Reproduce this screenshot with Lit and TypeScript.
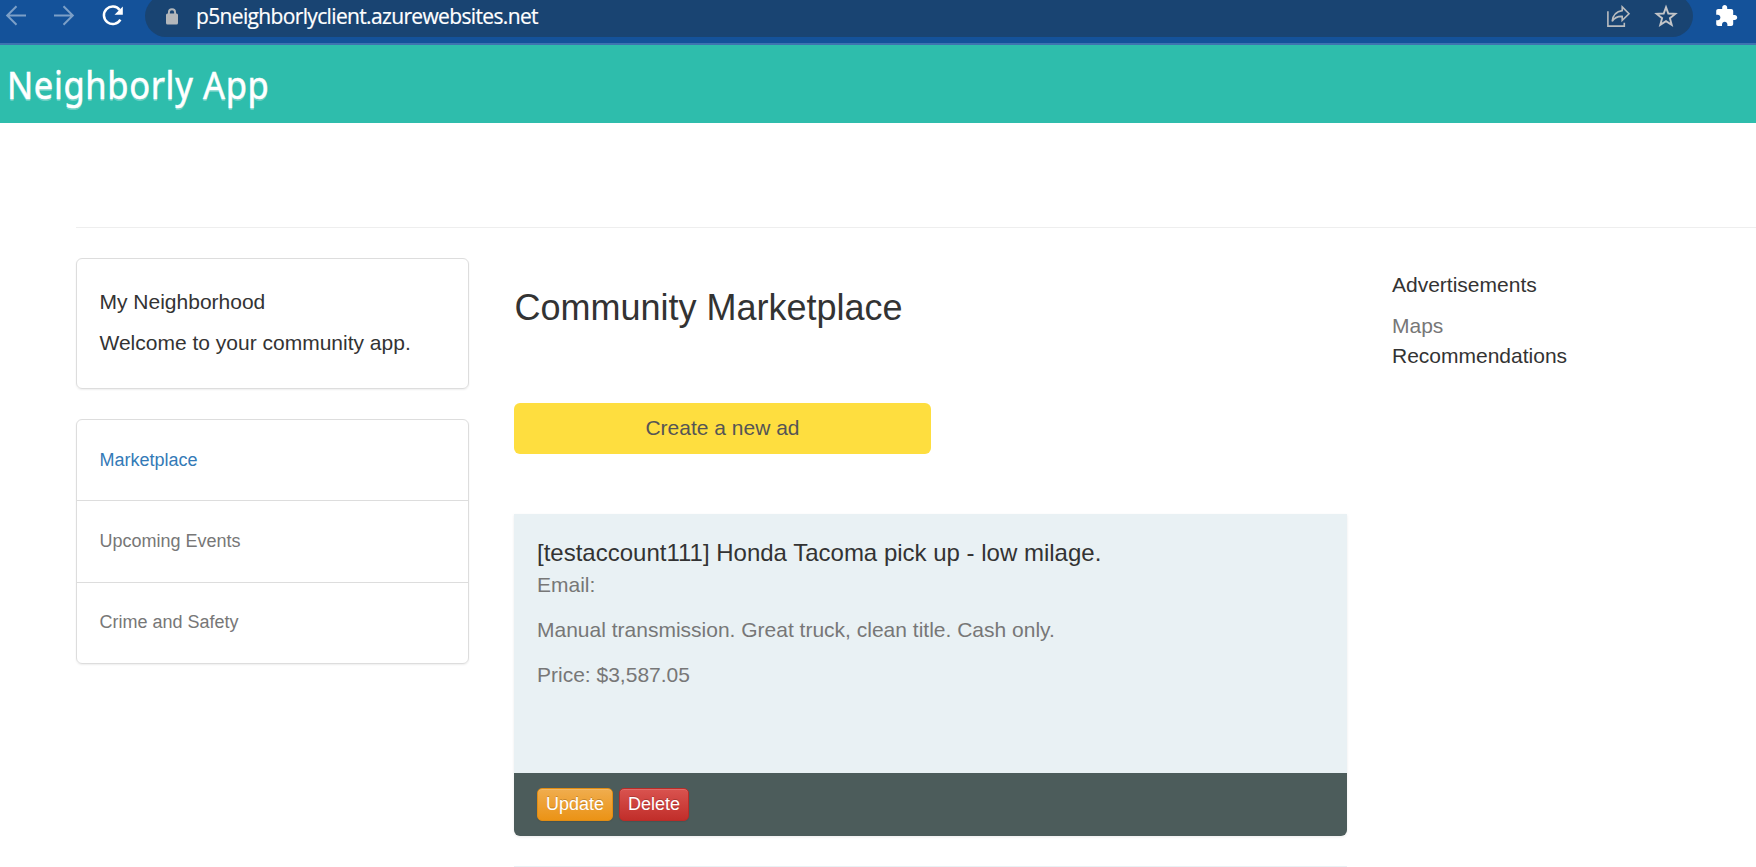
import { LitElement, html, css } from "lit";
import { customElement, property } from "lit/decorators.js";

@customElement("browser-bar")
class BrowserBar extends LitElement {
  static styles = css`
    :host { display: block; height: 43px; overflow: hidden; background: #14529a; border-bottom: 2px solid #3e73b0; }
    .row { display: flex; align-items: flex-start; height: 43px; }
    .nav { display: flex; flex: none; width: 145px; }
    svg { display: block; flex: none; }
    .back { margin-left: 4px; }
    .forward { margin-left: 24px; }
    .reload { margin-left: 24px; }
    .pill { display: flex; flex: none; width: 1548px; height: 42px; margin-top: -5px; padding-top: 5px; box-sizing: border-box; border-radius: 21px; background: #194472; }
    .lock { margin-left: 20px; }
    .url { flex: none; margin-left: 17px; width: 1409px; font: 21px/32px "Open Sans", "Noto Sans", sans-serif; letter-spacing: -0.65px; -webkit-text-stroke: 0.2px #fff; color: #fff; white-space: nowrap; }
    .star { margin-left: 23px; }
    .puzzle { margin-left: 20px; }
  `;
  render() {
    return html`<div class="row">
      <div class="nav">
        <svg class="back" width="24" height="32" viewBox="0 0 24 32" fill="none" stroke="#7c9fc7" stroke-width="2"><path d="M22 15.500H3.500M12.500 6.200L3.200 15.500l9.300 9.300" /></svg>
        <svg class="forward" width="24" height="32" viewBox="0 0 24 32" fill="none" stroke="#7c9fc7" stroke-width="2"><path d="M2 15.500h18.500M11.500 6.200l9.300 9.300-9.300 9.300" /></svg>
        <svg class="reload" width="26" height="32" viewBox="0 0 26 32"><path d="M19.700 9.900A8.800 8.800 0 1 0 20.400 19.600" fill="none" stroke="#fff" stroke-width="2.500" /><path d="M22.800 6.500v8.300h-8.300z" fill="#fff" /></svg>
      </div>
      <div class="pill">
        <svg class="lock" width="14" height="32" viewBox="0 0 14 32"><rect x="1" y="13.500" width="12" height="11" rx="1.500" fill="#b3b7bb" /><path d="M3.900 14v-1.600a3.100 3.100 0 0 1 6.200 0V14" fill="none" stroke="#b3b7bb" stroke-width="1.900" /></svg>
        <div class="url">p5neighborlyclient.azurewebsites.net</div>
        <svg class="share" width="26" height="32" viewBox="0 0 26 32" fill="none" stroke="#b9bcbf" stroke-width="1.600"><path d="M2.900 11.200v14.900h16.400v-3.400" /><path d="M17.200 6.900l6.800 6.800-6.800 6.700v-4c-4.700-.2-7.700 1.200-10 4.900.6-5.300 3.700-9.800 10-10.700z" /></svg>
        <svg class="star" width="24" height="32" viewBox="0 0 24 32" fill="none" stroke="#c3c5c8" stroke-width="1.900"><path d="M12 7.200l2.300 6.300 7 .4-5.400 4.300 1.800 6.700-5.700-3.700-5.700 3.700 1.800-6.700-5.400-4.300 7-.4z" /></svg>
      </div>
      <svg class="puzzle" width="27" height="32" viewBox="0 0 27 32"><path transform="translate(1.200 4)" fill="#fff" d="M20.500 11H19V7c0-1.100-.9-2-2-2h-4V3.500C13 2.120 11.880 1 10.500 1S8 2.120 8 3.500V5H4c-1.100 0-1.990.9-1.990 2v3.800H3.500c1.490 0 2.700 1.210 2.700 2.700s-1.210 2.700-2.700 2.700H2V20c0 1.100.9 2 2 2h3.800v-1.500c0-1.490 1.210-2.700 2.700-2.700 1.490 0 2.700 1.210 2.700 2.700V22H17c1.100 0 2-.9 2-2v-4h1.500c1.380 0 2.500-1.120 2.500-2.500S21.880 11 20.500 11z" /></svg>
    </div>`;
  }
}

interface Ad { title: string; email: string; text: string; price: string; }

@customElement("ad-card")
class AdCard extends LitElement {
  @property({ attribute: false }) ad!: Ad;
  static styles = css`
    :host { display: block; width: 833px; border-radius: 0 0 6px 6px; box-shadow: 0 1px 3px rgba(0, 0, 0, 0.08); overflow: hidden; }
    .body { height: 259px; padding: 26px 23px 0; box-sizing: border-box; background: #e9f1f4; color: #777; }
    h4 { margin: 0; font-size: 24px; line-height: 26px; font-weight: 400; color: #333; }
    p { margin: 0 0 15px; line-height: 30px; }
    .email { margin-top: 4px; }
    .foot { display: flex; gap: 6px; height: 63px; padding: 15px 23px 0; box-sizing: border-box; background: #4c5c5b; }
    button { height: 33px; padding: 0 8px 1px; box-sizing: border-box; font: 18px/26px "Liberation Sans", Arial, sans-serif; color: #fff; border: 1px solid; border-radius: 5px; text-shadow: 0 -1px 0 rgba(0, 0, 0, 0.2); box-shadow: inset 0 1px 0 rgba(255, 255, 255, 0.15), 0 1px 1px rgba(0, 0, 0, 0.075); }
    .update { width: 76px; background: linear-gradient(#f0ad4e, #eb9316); border-color: #e38d13; }
    .delete { width: 70px; background: linear-gradient(#d9534f, #c12e2a); border-color: #b92c28; }
  `;
  render() {
    return html`<div class="body">
        <h4>${this.ad.title}</h4>
        <p class="email">${this.ad.email}</p>
        <p>${this.ad.text}</p>
        <p>${this.ad.price}</p>
      </div>
      <div class="foot"><button class="update">Update</button><button class="delete">Delete</button></div>`;
  }
}

@customElement("app-root")
class AppRoot extends LitElement {
  static styles = css`
    :host { display: block; height: 867px; overflow: hidden; background: #fff; color: #333; font: 21px/30px "Liberation Sans", Arial, sans-serif; }
    header { height: 78px; padding: 15px 0 0 7px; box-sizing: border-box; background: #2ebdac; }
    .brand { display: inline-block; font: 400 37.5px/50px "Noto Sans", "Open Sans", sans-serif; letter-spacing: 0.7px; -webkit-text-stroke: 0.5px #fff; color: #fff; text-shadow: 0 2px 0 rgba(255, 255, 255, 0.3); white-space: nowrap; transform: scaleX(0.92); transform-origin: 0 0; }
    main { margin: 104px 0 0 76px; border-top: 1px solid #eee; padding-top: 30px; display: flex; align-items: flex-start; }
    .side { width: 393px; display: flex; flex-direction: column; gap: 30px; }
    .panel { border: 1px solid #ddd; border-radius: 6px; box-shadow: 0 1px 2px rgba(0, 0, 0, 0.07); box-sizing: border-box; }
    .intro { height: 131px; padding: 28px 22.5px 0; }
    .intro p { margin: 0 0 11px; }
    .menu { height: 245px; display: grid; grid-template-rows: 81px 82px 80px; font-size: 18px; line-height: 26px; color: #777; }
    .item { padding: 27px 22.5px 0; box-sizing: border-box; border-bottom: 1px solid #ddd; }
    .item:last-child { border-bottom: 0; padding-top: 26px; }
    .active { color: #337ab7; }
    .center { width: 833px; margin-left: 45px; padding-top: 30px; }
    h1 { margin: 0; padding-left: 0.5px; font-size: 36px; line-height: 40px; font-weight: 400; }
    .create { display: block; width: 417px; height: 51px; margin: 75px 0 60px; padding: 0 0 2px; border: 0; border-radius: 6px; background: #fede3f; color: #555; font: inherit; }
    hr { margin: 30px 0 0; border: 0; border-top: 1px solid #e9f1f4; }
    .ads { margin-left: 45px; padding-top: 12px; }
    .ads p { margin: 0; }
    .ads .maps { margin-top: 11px; color: #777; }
  `;
  private ad: Ad = {
    title: "[testaccount111] Honda Tacoma pick up - low milage.",
    email: "Email:",
    text: "Manual transmission. Great truck, clean title. Cash only.",
    price: "Price: $3,587.05",
  };
  render() {
    return html`<browser-bar></browser-bar>
      <header><span class="brand">Neighborly App</span></header>
      <main>
        <aside class="side">
          <div class="panel intro"><p>My Neighborhood</p><p>Welcome to your community app.</p></div>
          <nav class="panel menu">
            <div class="item active">Marketplace</div>
            <div class="item">Upcoming Events</div>
            <div class="item">Crime and Safety</div>
          </nav>
        </aside>
        <section class="center">
          <h1>Community Marketplace</h1>
          <button class="create">Create a new ad</button>
          <ad-card .ad=${this.ad}></ad-card>
          <hr />
        </section>
        <aside class="ads"><p>Advertisements</p><p class="maps">Maps</p><p>Recommendations</p></aside>
      </main>`;
  }
}
